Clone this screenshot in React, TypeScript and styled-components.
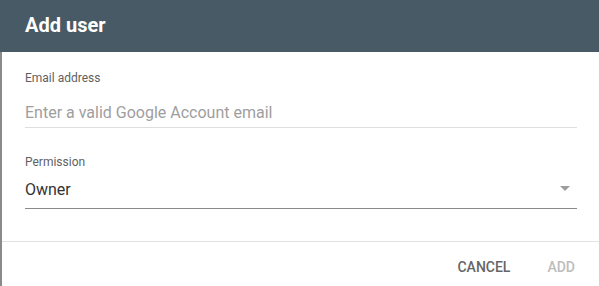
import styled, { createGlobalStyle } from "styled-components"

const GlobalStyle = createGlobalStyle`
  html, body {
    margin: 0;
    padding: 0;
    background: #fff;
  }
  body {
    font-family: Roboto, "Liberation Sans", Arial, sans-serif;
  }
`

const Dialog = styled.div`
  width: 599px;
  height: 286px;
  display: flex;
  flex-direction: column;
  background: #fff;
  overflow: hidden;
`

const Header = styled.div`
  height: 52px;
  flex: none;
  display: flex;
  align-items: center;
  padding: 0 25px;
  background: #475a65;
`

const Title = styled.h1`
  margin: 0 0 3px;
  font-size: 20px;
  font-weight: 700;
  color: #fff;
`

const Body = styled.div`
  flex: 1;
  display: flex;
  flex-direction: column;
  border-left: 2px solid #8a8a8a;
`

const Form = styled.div`
  padding: 18px 22px 32px 23px;
  display: flex;
  flex-direction: column;
`

const Label = styled.div<{ $gap?: number }>`
  font-size: 12px;
  line-height: 16px;
  color: #5f5f5f;
  margin-top: ${(p) => p.$gap ?? 0}px;
`

const Field = styled.div<{ $active?: boolean }>`
  display: flex;
  align-items: center;
  justify-content: space-between;
  font-size: 16px;
  line-height: 20px;
  color: ${(p) => (p.$active ? "#333" : "#9e9e9e")};
  border-bottom: 1px solid ${(p) => (p.$active ? "#8a8a8a" : "#dedede")};
`

const EmailField = styled(Field)`
  margin-top: 17px;
  padding-bottom: 4px;
`

const SelectField = styled(Field)`
  margin-top: 10px;
  padding-bottom: 8px;
`

const Caret = styled.span`
  width: 0;
  height: 0;
  margin: 0 7px 3px 0;
  border-left: 5px solid transparent;
  border-right: 5px solid transparent;
  border-top: 5px solid #9e9e9e;
`

const Footer = styled.div`
  border-top: 1px solid #e2e2e2;
  display: flex;
  justify-content: flex-end;
  gap: 21px;
  padding: 17px 16px 0 0;
  flex: 1;
`

const Button = styled.button<{ $disabled?: boolean }>`
  background: none;
  border: none;
  padding: 0 8px;
  height: 16px;
  font-family: inherit;
  font-size: 14px;
  line-height: 16px;
  font-weight: 500;
  color: ${(p) => (p.$disabled ? "#bdbdbd" : "#666")};
  cursor: pointer;
`

export default function App() {
  return (
    <>
      <GlobalStyle />
      <Dialog>
        <Header>
          <Title>Add user</Title>
        </Header>
        <Body>
          <Form>
            <Label>Email address</Label>
            <EmailField>Enter a valid Google Account email</EmailField>
            <Label $gap={26}>Permission</Label>
            <SelectField $active>
              <span>Owner</span>
              <Caret />
            </SelectField>
          </Form>
          <Footer>
            <Button>CANCEL</Button>
            <Button $disabled>ADD</Button>
          </Footer>
        </Body>
      </Dialog>
    </>
  )
}
